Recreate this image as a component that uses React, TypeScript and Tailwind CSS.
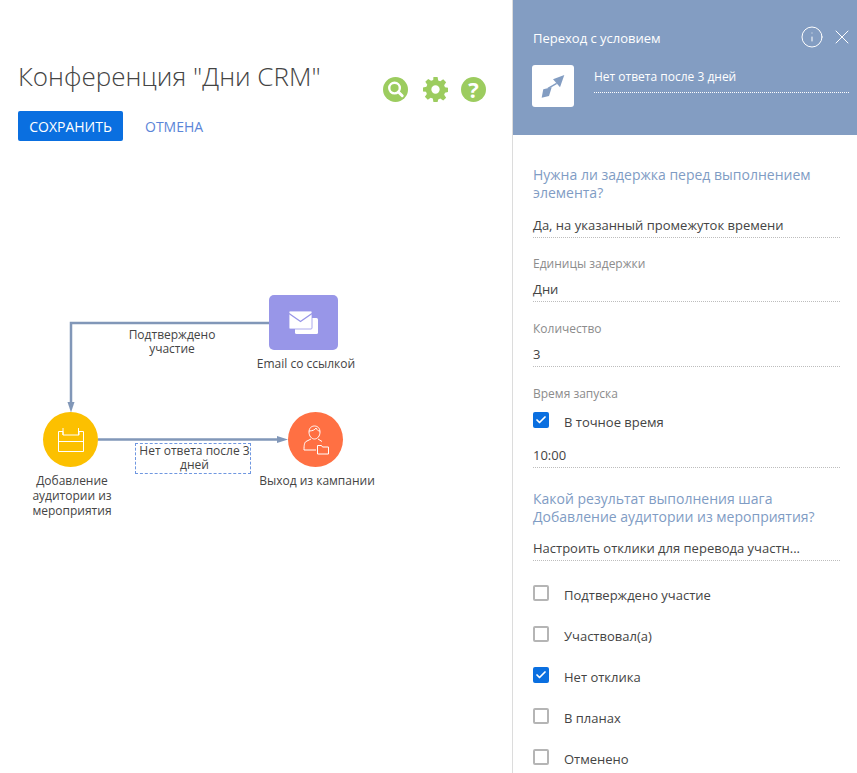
import { Check, Info, X } from 'lucide-react';

const FONT = 'font-["Open_Sans","Noto_Sans",sans-serif]';

function Field({ label, value, className = '' }: { label?: string; value: string; className?: string }) {
  return (
    <div className={className}>
      {label && <div className="mb-[2px] h-[18px] text-[12px] leading-[18px] text-[#8c8c8c]">{label}</div>}
      <div className="h-[27px] border-b border-dotted border-[#bdbdbd] pt-[4px] text-[13px] leading-[20px] text-[#444]">
        {value}
      </div>
    </div>
  );
}

function CheckRow({ label, checked = false }: { label: string; checked?: boolean }) {
  return (
    <div className="flex h-[16px] items-start gap-[15px] text-[13px] leading-[16px] text-[#444]">
      {checked ? (
        <span className="flex h-[16px] w-[16px] items-center justify-center rounded-[2px] bg-[#0a6fe0]">
          <Check className="h-[12px] w-[12px] text-white" strokeWidth={3.5} />
        </span>
      ) : (
        <span className="h-[16px] w-[16px] rounded-[2px] border-2 border-[#b5b5b5] bg-white" />
      )}
      <span className="mt-[2px]">{label}</span>
    </div>
  );
}

function NodeLabel({ text, className }: { text: string; className: string }) {
  return <div className={`absolute text-center text-[12px] text-[#444] ${className}`}>{text}</div>;
}

function Diagram() {
  return (
    <div className="relative h-[640px] w-full">
      {/* connectors */}
      <svg className="absolute left-0 top-0" width="512" height="640" fill="none">
        <path d="M269 184H71V265" stroke="#8197b8" strokeWidth="2.500" />
        <path d="M67.500 263h7L71 273.500z" fill="#8197b8" />
        <path d="M98 300.500h180" stroke="#8197b8" strokeWidth="2.500" />
        <path d="M277 297l11 3.500-11 3.500z" fill="#8197b8" />
      </svg>

      <div className="absolute left-[269px] top-[156px] flex h-[55px] w-[69px] items-center justify-center rounded-[5px] bg-[#9896e8]">
        <svg width="29" height="23" viewBox="0 0 29 23">
          <path d="M6 7h21.500a1.500 1.500 0 0 1 1.500 1.500v13a1.500 1.500 0 0 1-1.500 1.500H7.500A1.500 1.500 0 0 1 6 21.500z" fill="#fff" />
          <rect x="0" y="0" width="23" height="18" rx="1" fill="#fff" stroke="#9896e8" strokeWidth="0.800" />
          <path d="M0 2.500l11.500 8 11.500-8" fill="none" stroke="#9896e8" strokeWidth="1.400" />
        </svg>
      </div>
      <NodeLabel text="Email со ссылкой" className="left-[246px] top-[217px] w-[120px] leading-[15px]" />

      <div className="absolute left-[43px] top-[273px] flex h-[55px] w-[55px] items-center justify-center rounded-full bg-[#fcc000]">
        <svg width="26" height="24" viewBox="0 0 26 24" fill="none" stroke="#fff" strokeWidth="1">
          <path d="M.5 3.500h4.500V7h16V3.500h4.500v20H.5zM.5 13.500h25" />
          <path d="M5 0v7M20.500 0v7" />
        </svg>
      </div>
      <NodeLabel text="Добавление аудитории из мероприятия" className="left-[27px] top-[334px] w-[90px] leading-[15px]" />

      <div className="absolute left-[288px] top-[273px] flex h-[55px] w-[55px] items-center justify-center rounded-full bg-[#ff7043]">
        <svg width="26" height="30" viewBox="0 0 26 30" fill="none" stroke="#fff" strokeWidth="1">
          <path d="M6 7c0-4 2.500-6 5.500-6s5.500 2 5.500 6-2.500 7-5.500 7S6 11 6 7z" />
          <path d="M6 6c3 0 6-1 7-3 1 2 2 3 4 3" />
          <path d="M8 14l-5 2.500C1.500 17.500 1 20 1 25h12" />
          <path d="M15 14l4 2.500" />
          <path d="M14.500 21v8h11v-7h-6l-1-1.500h-4z" fill="#ff7043" />
        </svg>
      </div>
      <NodeLabel text="Выход из кампании" className="left-[252px] top-[334px] w-[130px] leading-[15px]" />

      <NodeLabel text="Подтверждено участие" className="left-[118px] top-[189px] w-[108px] leading-[14px]" />
      <div className="absolute left-[135px] top-[304px] h-[31px] w-[116px] border border-dashed border-[#6f97e0] pl-[3px] text-center text-[12px] leading-[14px] text-[#444]">
        Нет ответа после 3 дней
      </div>
    </div>
  );
}

function GreenIcons() {
  return (
    <div className="flex items-center">
      <svg width="25" height="25" viewBox="0 0 26 26">
        <circle cx="13" cy="13" r="13" fill="#9ccc5f" />
        <circle cx="12" cy="11.500" r="5.500" fill="none" stroke="#fff" strokeWidth="2.500" />
        <path d="M16 15.500l4 4" stroke="#fff" strokeWidth="3" strokeLinecap="round" />
      </svg>
      <svg className="ml-[15px]" width="25" height="25" viewBox="0 0 24 24">
        <path
          fill="#9ccc5f"
          fillRule="evenodd"
          d="M10 0h4l.6 3.300 2 .8L19.400 2.200l2.800 2.800-1.900 2.800.8 2 3.300.6v4l-3.300.6-.8 2 1.900 2.800-2.800 2.800-2.800-1.900-2 .8L14 24h-4l-.6-3.300-2-.8-2.800 1.900-2.800-2.800 1.900-2.800-.8-2L0 14v-4l3.300-.6.8-2L2.200 4.600 5 1.800l2.800 1.900 2-.8zM12 8a4 4 0 1 0 0 8 4 4 0 0 0 0-8z"
        />
      </svg>
      <span className="ml-[13px] flex h-[25px] w-[25px] items-center justify-center rounded-full bg-[#9ccc5f] text-[22px] font-bold text-white">
        ?
      </span>
    </div>
  );
}

export default function App() {
  return (
    <div className={`flex h-[773px] w-[857px] overflow-hidden bg-white ${FONT}`}>
      <div className="w-[512px] shrink-0">
        <div className="flex h-[139px] flex-col pl-[18px] pt-[58px]">
          <div className="flex h-[53px] shrink-0 justify-between pr-[26px]">
            <h1 className="text-[26px] font-light leading-[36px] text-[#444]">Конференция "Дни CRM"</h1>
            <div className="pt-[19px]">
              <GreenIcons />
            </div>
          </div>
          <div className="flex shrink-0 items-center gap-[22px]">
            <button className="h-[30px] w-[105px] rounded-[2px] bg-[#0a6fe0] text-[14px] text-white">СОХРАНИТЬ</button>
            <button className="text-[14px] text-[#5b85d8]">ОТМЕНА</button>
          </div>
        </div>
        <Diagram />
      </div>

      <div className="w-[345px] shrink-0 border-l border-[#dcdcdc]">
        <div className="h-[135px] bg-[#839dc2] pl-[19px] pr-[3px] pt-[25px] text-white">
          <div className="flex h-[24px] items-center justify-between">
            <span className="ml-[1px] pt-[4px] text-[13px]">Переход с условием</span>
            <div className="flex items-center gap-[6px]">
              <Info className="h-[24px] w-[24px]" strokeWidth={1} />
              <X className="h-[24px] w-[24px]" strokeWidth={1} />
            </div>
          </div>
          <div className="mt-[16px] flex gap-[20px] pr-[5px]">
            <div className="h-[42px] w-[42px] rounded-[3px] bg-white">
              <svg width="42" height="42" viewBox="0 0 42 42" fill="#839dc2">
                <path d="M32.300 10L21 14.300l7 8z" />
                <path d="M24.700 18.300L16 23.300" stroke="#839dc2" strokeWidth="1.500" />
                <path d="M9.700 32.700l1.600-8.400 8.400-2L17 31z" />
              </svg>
            </div>
            <div className="h-[28px] flex-1 border-b border-dotted border-white pt-[2px] text-[12px] leading-[20px]">
              Нет ответа после 3 дней
            </div>
          </div>
        </div>

        <div className="pl-[20px] pr-[17px] pt-[31px]">
          <div className="text-[14px] leading-[18px] text-[#7f9cc4]">
            Нужна ли задержка перед выполнением элемента?
          </div>
          <Field value="Да, на указанный промежуток времени" className="mt-[9px]" />
          <Field label="Единицы задержки" value="Дни" className="mt-[17px]" />
          <Field label="Количество" value="3" className="mt-[18px]" />
          <div className="mt-[18px] h-[18px] text-[12px] leading-[18px] text-[#8c8c8c]">Время запуска</div>
          <div className="mt-[9px]">
            <CheckRow label="В точное время" checked />
          </div>
          <Field value="10:00" className="mt-[13px]" />
          <div className="mt-[22px] text-[14px] leading-[18px] text-[#7f9cc4]">
            Какой результат выполнения шага
            <br />
            Добавление аудитории из мероприятия?
          </div>
          <Field value="Настроить отклики для перевода участн..." className="mt-[8px]" />
          <div className="mt-[24px] flex flex-col gap-[25px]">
            <CheckRow label="Подтверждено участие" />
            <CheckRow label="Участвовал(а)" />
            <CheckRow label="Нет отклика" checked />
            <CheckRow label="В планах" />
            <CheckRow label="Отменено" />
          </div>
        </div>
      </div>
    </div>
  );
}
